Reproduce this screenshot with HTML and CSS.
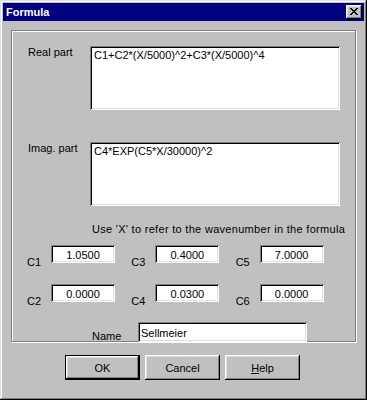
FILE: index.html
```html
<!DOCTYPE html>
<html lang="en">
<head>
    <meta charset="UTF-8">
    <title>Formula</title>
    <link rel="stylesheet" href="styles.css">
</head>
<body>
    <div class="window">
        <div class="titlebar">
            <span class="title">Formula</span>
            <button class="close-btn" type="button">
                <svg width="8" height="7" viewBox="0 0 8 7" shape-rendering="crispEdges">
                    <path d="M0 0h2v1H0zM6 0h2v1H6zM1 1h2v1H1zM5 1h2v1H5zM2 2h4v1H2zM3 3h2v1H3zM2 4h4v1H2zM1 5h2v1H1zM5 5h2v1H5zM0 6h2v1H0zM6 6h2v1H6z" fill="#000"/>
                </svg>
            </button>
        </div>
        <div class="client">
            <div class="groupbox">
                <div class="formula-row">
                    <label class="formula-label" for="realPart">Real part</label>
                    <textarea class="field formula-input" id="realPart">C1+C2*(X/5000)^2+C3*(X/5000)^4</textarea>
                </div>
                <div class="formula-row">
                    <label class="formula-label" for="imagPart">Imag. part</label>
                    <textarea class="field formula-input" id="imagPart">C4*EXP(C5*X/30000)^2</textarea>
                </div>
                <p class="hint">Use 'X' to refer to the wavenumber in the formula</p>
                <div class="const-row">
                    <div class="const-cell"><label class="const-label">C1</label><input class="field const-input" value="1.0500"></div>
                    <div class="const-cell"><label class="const-label">C3</label><input class="field const-input" value="0.4000"></div>
                    <div class="const-cell"><label class="const-label">C5</label><input class="field const-input" value="7.0000"></div>
                </div>
                <div class="const-row">
                    <div class="const-cell"><label class="const-label">C2</label><input class="field const-input" value="0.0000"></div>
                    <div class="const-cell"><label class="const-label">C4</label><input class="field const-input" value="0.0300"></div>
                    <div class="const-cell"><label class="const-label">C6</label><input class="field const-input" value="0.0000"></div>
                </div>
                <div class="name-row">
                    <label class="name-label" for="formulaName">Name</label>
                    <input class="field name-input" id="formulaName" value="Sellmeier">
                </div>
            </div>
            <div class="buttons">
                <button class="btn default" type="button">OK</button>
                <button class="btn" type="button">Cancel</button>
                <button class="btn" type="button"><u>H</u>elp</button>
            </div>
        </div>
    </div>
</body>
</html>
```

FILE: styles.css
```css
* {
    box-sizing: border-box;
}

body {
    margin: 0;
    padding: 0;
    background: #c0c0c0;
    font-family: "Liberation Sans", Arial, sans-serif;
    font-size: 11px;
    line-height: 13px;
    color: #000;
}

.window {
    width: 367px;
    height: 400px;
    padding: 3px;
    background: #c0c0c0;
    box-shadow: inset -1px -1px #000, inset 1px 1px #dfdfdf, inset -2px -2px #808080, inset 2px 2px #fff;
}

.titlebar {
    height: 18px;
    background: #000080;
    display: flex;
    align-items: center;
    justify-content: space-between;
    padding: 0 2px 0 3px;
}

.title {
    color: #fff;
    font-weight: bold;
    font-size: 11px;
}

.close-btn {
    width: 16px;
    height: 14px;
    padding: 0;
    border: none;
    background: #c0c0c0;
    display: flex;
    align-items: center;
    justify-content: center;
    box-shadow: inset -1px -1px #000, inset 1px 1px #fff, inset -2px -2px #808080, inset 2px 2px #dfdfdf;
}

.close-btn svg {
    display: block;
    margin: 0 0 1px 0;
}

.client {
    padding: 9px 8px 0 8px;
}

.groupbox {
    height: 312px;
    border: 1px solid #808080;
    box-shadow: inset 1px 1px #fff, 1px 1px #fff;
    padding: 15px 15px 0 16px;
}

.field {
    border: none;
    background: #fff;
    font-family: "Liberation Sans", Arial, sans-serif;
    font-size: 11px;
    line-height: 13px;
    color: #000;
    outline: none;
    box-shadow: inset 1px 1px #808080, inset -1px -1px #fff, inset 2px 2px #000, inset -2px -2px #dfdfdf;
}

.formula-row {
    display: flex;
}

.formula-row + .formula-row {
    margin-top: 32px;
}

.formula-label {
    width: 62px;
}

.formula-input {
    width: 250px;
    height: 64px;
    padding: 3px 4px;
    resize: none;
    overflow: hidden;
}

.hint {
    margin: 17px -12px 0 64px;
    letter-spacing: 0.3px;
    white-space: nowrap;
}

.const-row {
    display: flex;
    margin: 9px 0 0 -1px;
}

.const-row + .const-row {
    margin-top: 15px;
}

.const-cell {
    width: 112px;
    display: flex;
    align-items: flex-start;
}

.const-label {
    width: 24px;
    margin-top: 11px;
}

.const-input {
    width: 64px;
    height: 18px;
    padding: 1px 2px 0;
    text-align: center;
}

.name-row {
    display: flex;
    align-items: flex-start;
    margin: 14px 0 0 64px;
}

.name-label {
    width: 46px;
    margin-top: 8px;
}

.name-input {
    width: 169px;
    height: 20px;
    padding: 1px 3px 0;
}

.buttons {
    display: flex;
    justify-content: center;
    gap: 5px;
    margin-top: 13px;
    padding-right: 2px;
}

.btn {
    width: 75px;
    height: 25px;
    padding: 0;
    border: none;
    background: #c0c0c0;
    font-family: "Liberation Sans", Arial, sans-serif;
    font-size: 11px;
    color: #000;
    box-shadow: inset -1px -1px #000, inset 1px 1px #fff, inset -2px -2px #808080, inset 2px 2px #dfdfdf;
}

.btn.default {
    border: 1px solid #000;
}

.btn u {
    text-decoration: underline;
}
```
